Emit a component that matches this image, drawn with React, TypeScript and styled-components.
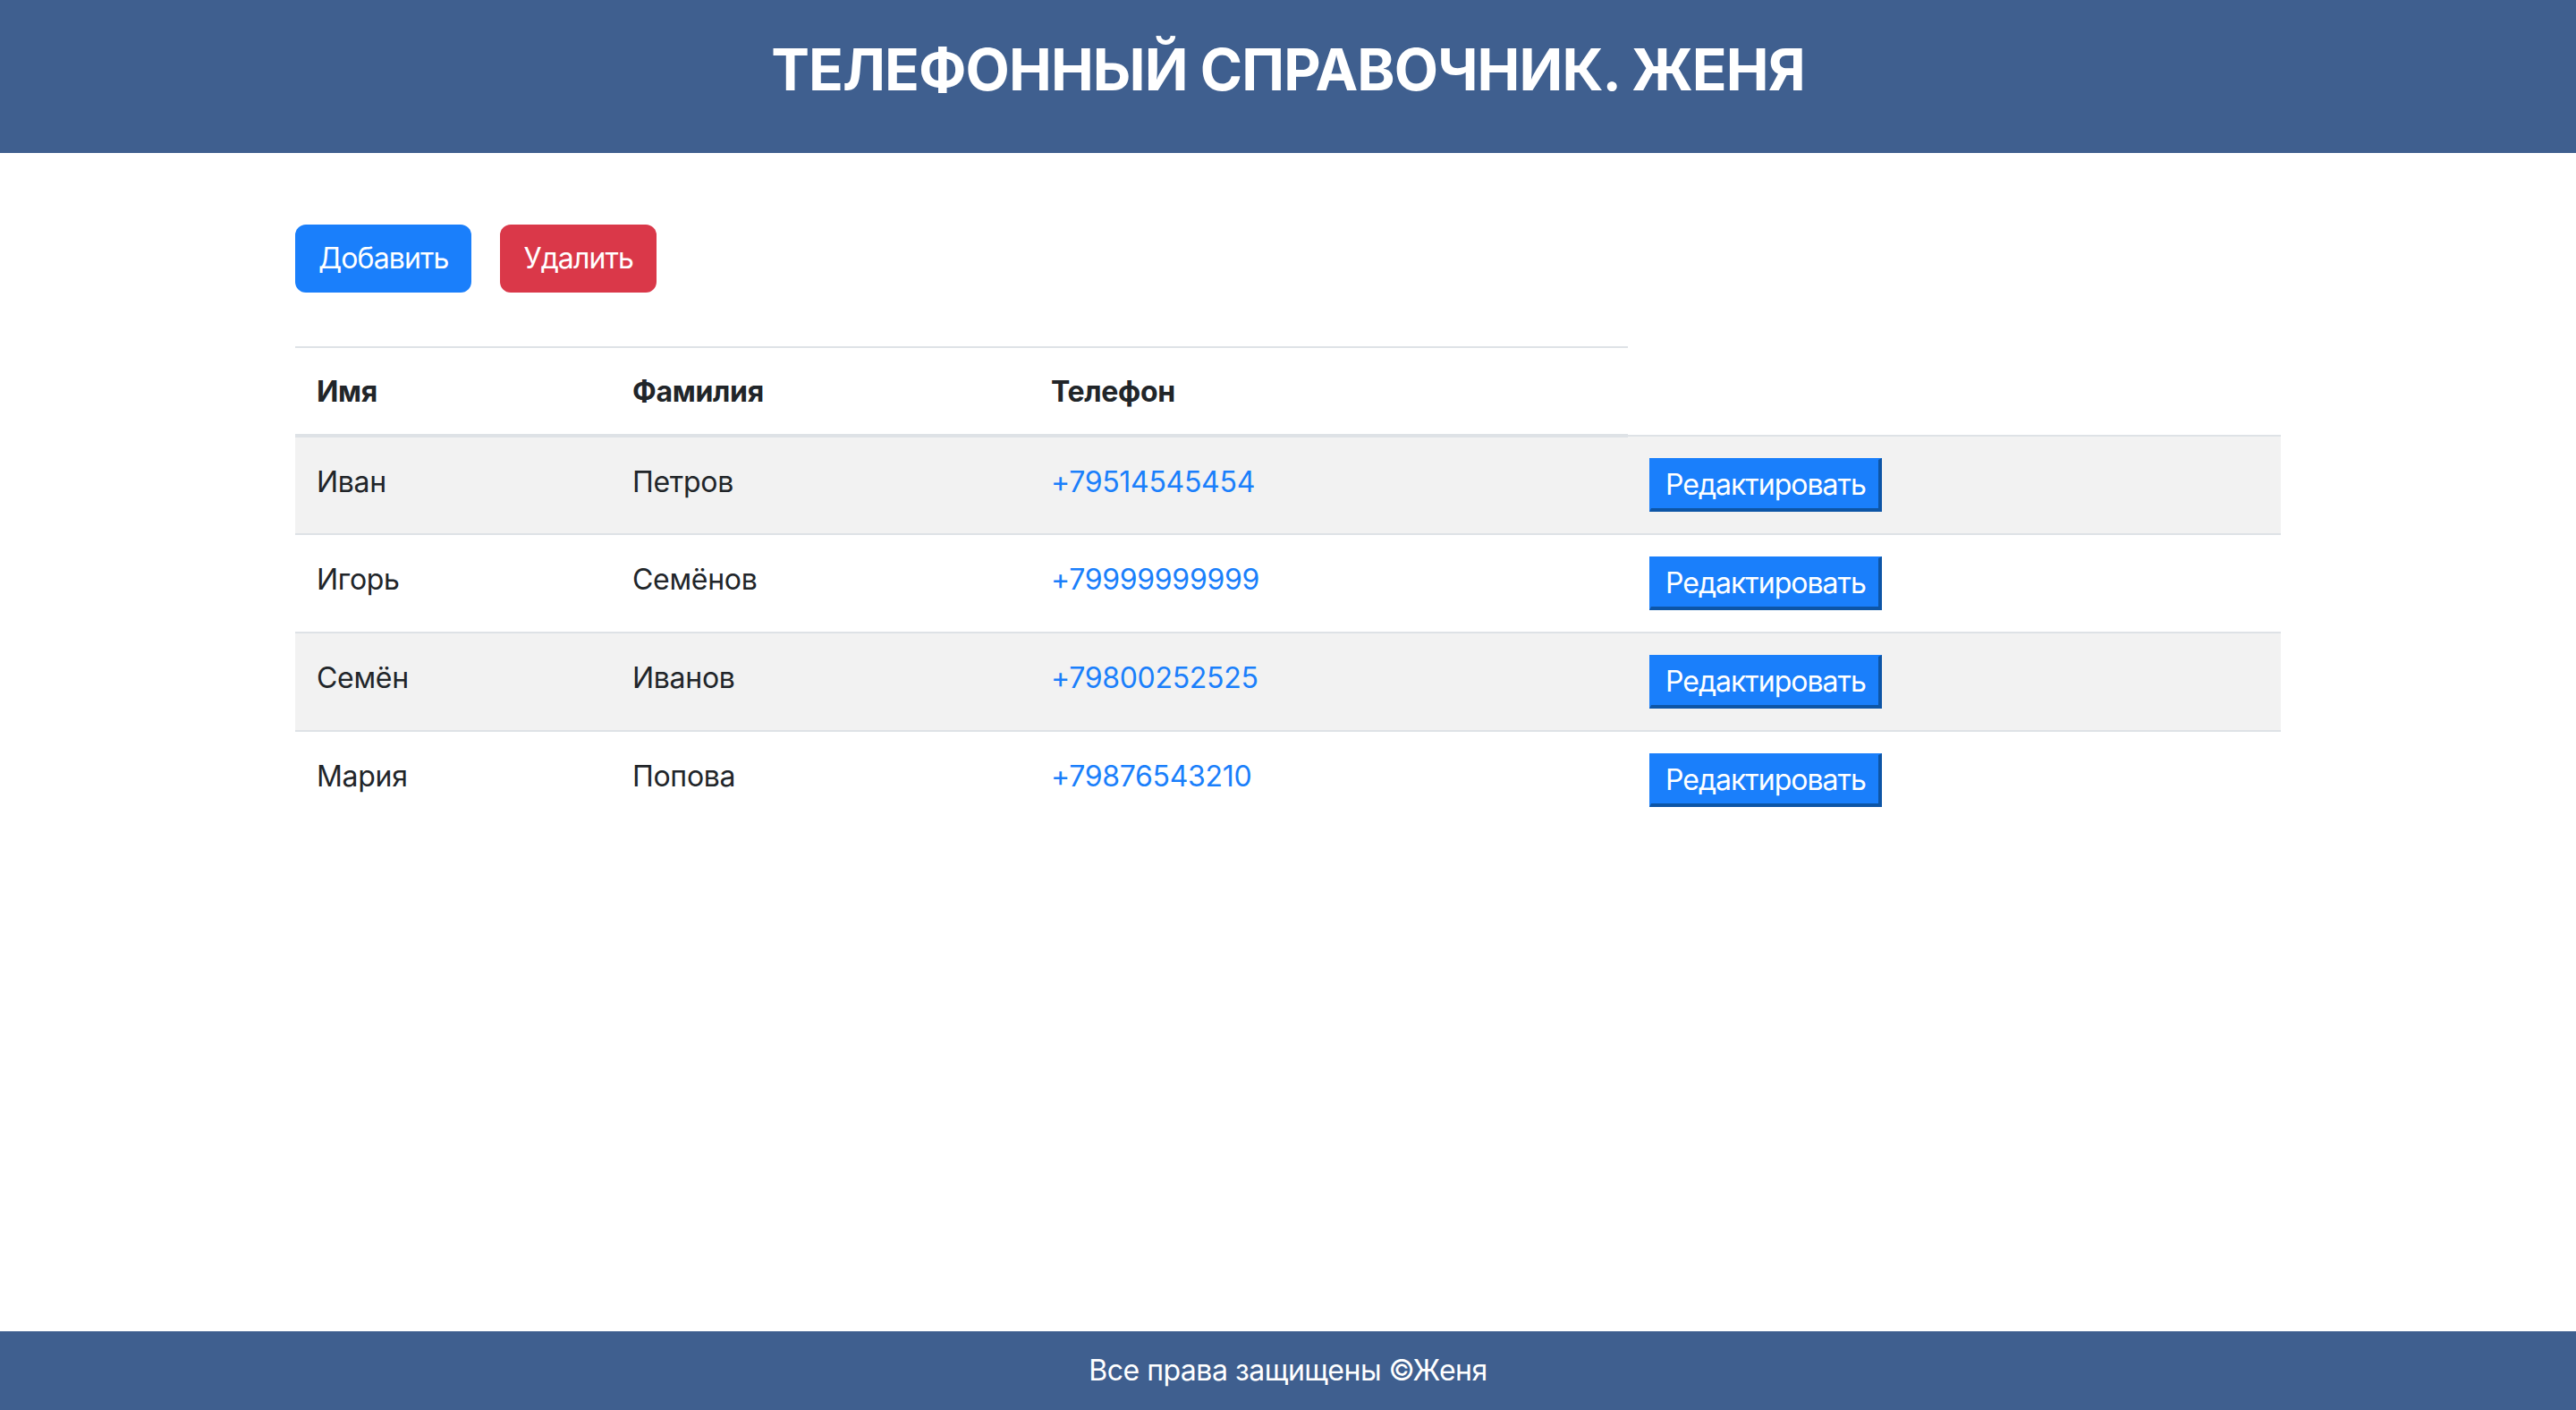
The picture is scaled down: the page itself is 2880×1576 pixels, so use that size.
import React from "react";
import styled, { createGlobalStyle } from "styled-components";

const GlobalStyle = createGlobalStyle`
  html, body { margin: 0; padding: 0; }
  body {
    font-family: Inter, "Noto Sans", "Liberation Sans", sans-serif;
    font-size: 32px;
    line-height: 48px;
    letter-spacing: -0.3px;
    color: #212529;
    background: #ffffff;
  }
  * { box-sizing: border-box; }
`;

const Page = styled.div`
  min-height: 100vh;
  display: flex;
  flex-direction: column;
`;

const Header = styled.header`
  height: 171px;
  background: #3f5f8f;
  padding-top: 39px;
`;

const Title = styled.h1`
  margin: 0;
  font-size: 64px;
  line-height: 77px;
  font-weight: 700;
  color: #ffffff;
  text-align: center;
  letter-spacing: -0.9px;
`;

const Main = styled.main`
  flex: 1;
`;

const Container = styled.div`
  width: 2220px;
  margin: 0 auto;
  padding-top: 80px;
  display: flex;
  flex-direction: column;
  gap: 60px;
`;

const Toolbar = styled.div`
  display: flex;
  gap: 32px;
`;

const ActionButton = styled.button<{ $variant: "primary" | "danger" }>`
  font-family: inherit;
  font-size: 32px;
  line-height: 48px;
  letter-spacing: -0.9px;
  padding: 12px 24px;
  border: 2px solid transparent;
  border-radius: 12px;
  color: #ffffff;
  background: ${(p) => (p.$variant === "primary" ? "#1a7ffb" : "#da3849")};
  cursor: pointer;
`;

const Table = styled.table`
  width: 100%;
  border-collapse: collapse;
`;

const HeadCell = styled.th<{ $w?: number }>`
  text-align: left;
  font-weight: 700;
  padding: 25px 24px 23px;
  vertical-align: bottom;
  border-top: 2px solid #dee2e6;
  border-bottom: 4px solid #dee2e6;
  width: ${(p) => (p.$w ? `${p.$w}px` : "auto")};
`;

const Row = styled.tr<{ $striped: boolean }>`
  background: ${(p) => (p.$striped ? "#f2f2f2" : "transparent")};
`;

const Cell = styled.td<{ $action?: boolean }>`
  padding: ${(p) => (p.$action ? "24px" : "26px 24px 22px")};
  vertical-align: top;
  border-top: 2px solid #dee2e6;
`;

const PhoneLink = styled.a`
  color: #1a7ffb;
  text-decoration: none;
`;

const EditButton = styled.button`
  display: block;
  font-family: inherit;
  font-size: 32px;
  line-height: 36px;
  letter-spacing: -1px;
  height: 60px;
  padding: 9px 14px 7px 16px;
  color: #ffffff;
  background: #1a7ffb;
  border-style: solid;
  border-width: 2px 4px 4px 2px;
  border-color: #1a7ffb #0d55a6 #0d55a6 #1a7ffb;
  cursor: pointer;
`;

const Footer = styled.footer`
  height: 88px;
  background: #3f5f8f;
  color: #ffffff;
  display: flex;
  align-items: center;
  justify-content: center;
  font-size: 32px;
  letter-spacing: -0.5px;
`;

const contacts = [
  { first: "Иван", last: "Петров", phone: "+79514545454" },
  { first: "Игорь", last: "Семёнов", phone: "+79999999999" },
  { first: "Семён", last: "Иванов", phone: "+79800252525" },
  { first: "Мария", last: "Попова", phone: "+79876543210" },
];

export default function App() {
  return (
    <>
      <GlobalStyle />
      <Page>
        <Header>
          <Title>ТЕЛЕФОННЫЙ СПРАВОЧНИК. ЖЕНЯ</Title>
        </Header>
        <Main>
          <Container>
            <Toolbar>
              <ActionButton $variant="primary">Добавить</ActionButton>
              <ActionButton $variant="danger">Удалить</ActionButton>
            </Toolbar>
            <Table>
              <thead>
                <tr>
                  <HeadCell $w={353}>Имя</HeadCell>
                  <HeadCell $w={468}>Фамилия</HeadCell>
                  <HeadCell $w={669}>Телефон</HeadCell>
                </tr>
              </thead>
              <tbody>
                {contacts.map((c, i) => (
                  <Row key={c.phone} $striped={i % 2 === 0}>
                    <Cell>{c.first}</Cell>
                    <Cell>{c.last}</Cell>
                    <Cell>
                      <PhoneLink href={`tel:${c.phone}`}>{c.phone}</PhoneLink>
                    </Cell>
                    <Cell $action>
                      <EditButton>Редактировать</EditButton>
                    </Cell>
                  </Row>
                ))}
              </tbody>
            </Table>
          </Container>
        </Main>
        <Footer>Все права защищены ©Женя</Footer>
      </Page>
    </>
  );
}
